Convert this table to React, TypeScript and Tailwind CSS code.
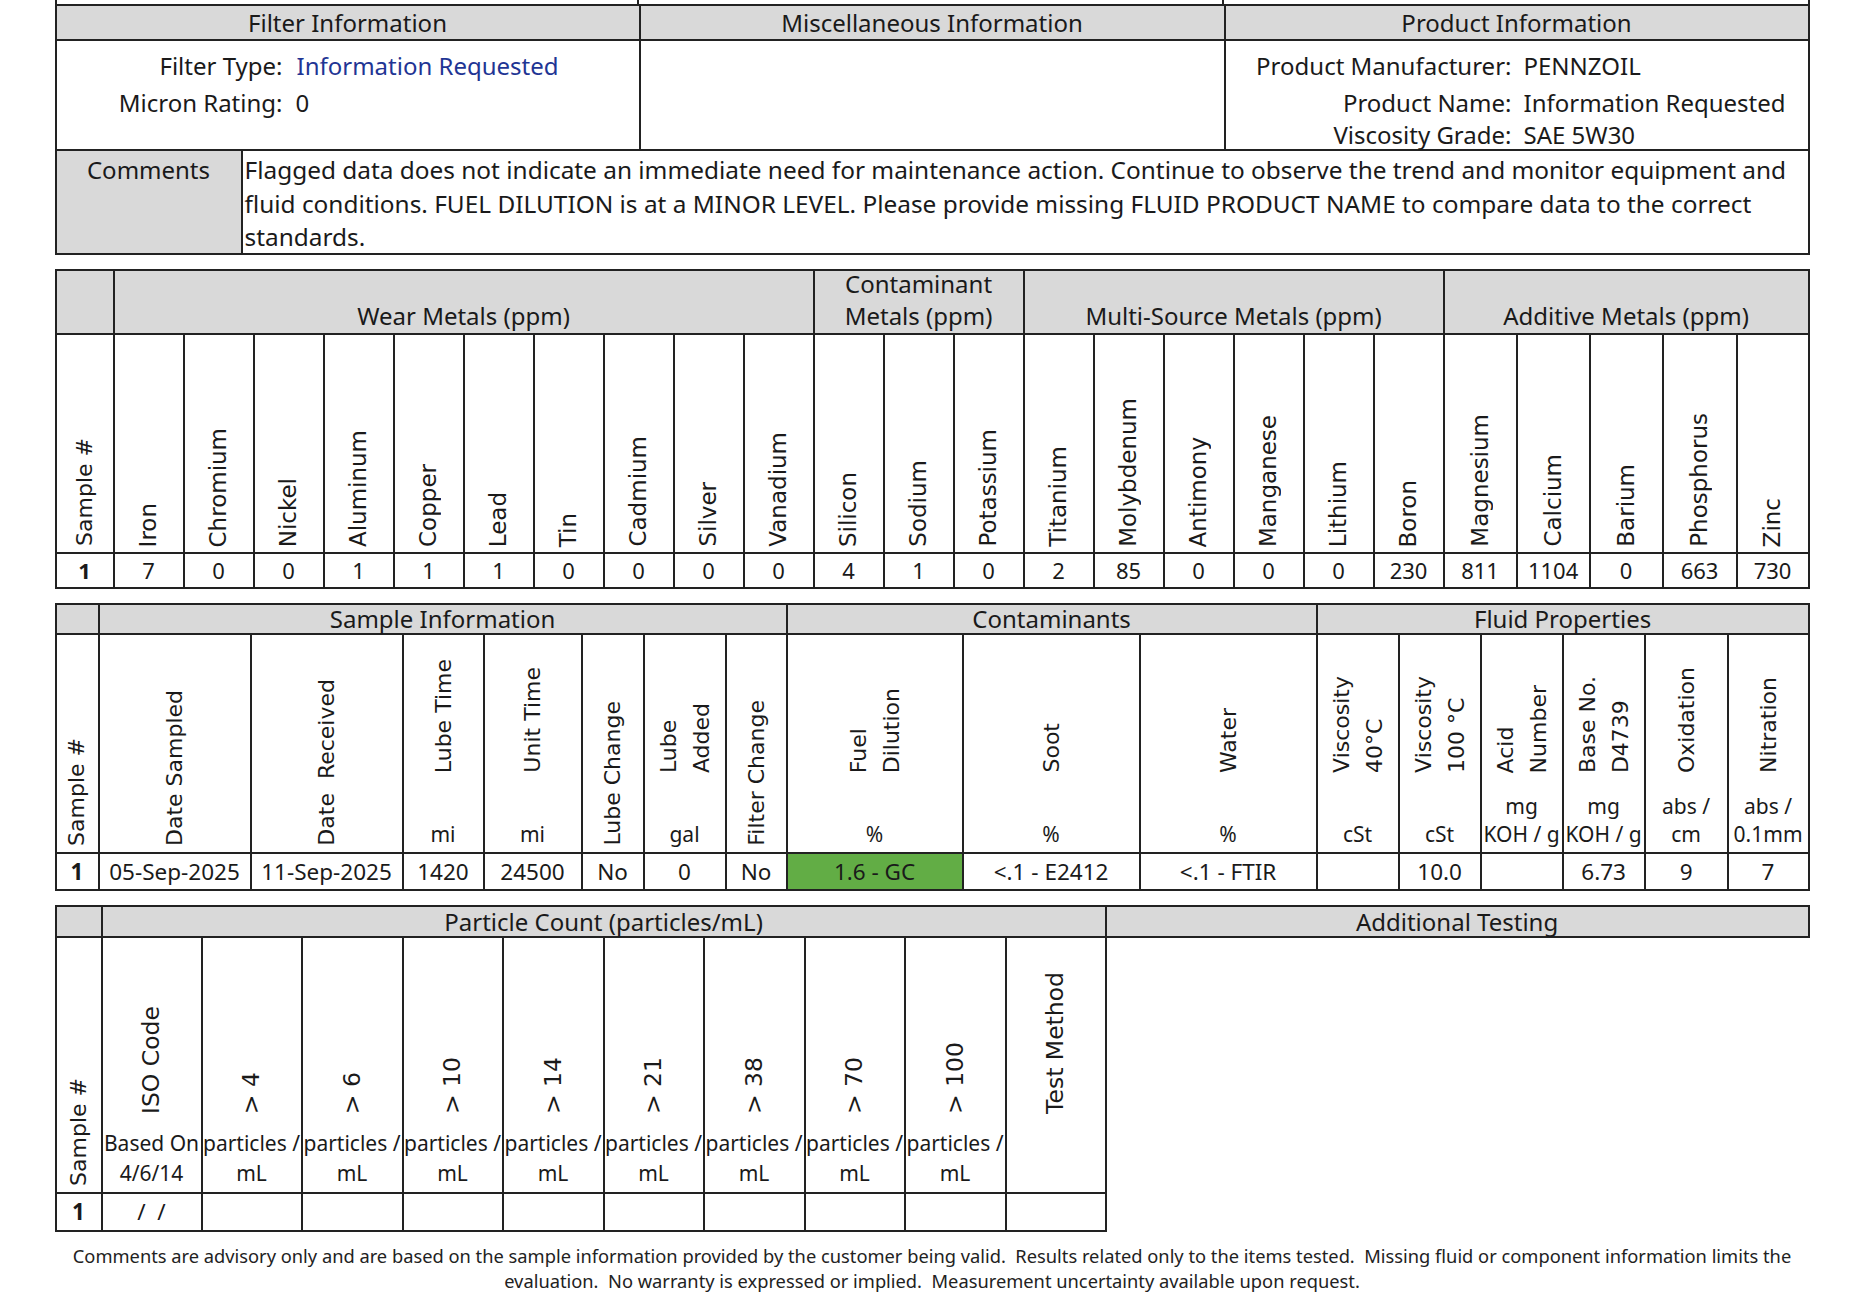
import React from 'react';

// shared cell styles
const B = 'border-2 border-[#222]';
const GRAY = 'bg-[#d9d9d9]';

type Col = { label: string; unit?: string; w?: string };

function Vert({ text, className = '' }: { text: string; className?: string }) {
  return (
    <span
      className={`[writing-mode:vertical-rl] rotate-180 whitespace-pre font-['DejaVu_Sans',sans-serif] text-[#1a1a1a] ${className}`}
    >
      {text}
    </span>
  );
}

const wearMetals = ['Iron', 'Chromium', 'Nickel', 'Aluminum', 'Copper', 'Lead', 'Tin', 'Cadmium', 'Silver', 'Vanadium'];
const contamMetals = ['Silicon', 'Sodium', 'Potassium'];
const multiMetals = ['Titanium', 'Molybdenum', 'Antimony', 'Manganese', 'Lithium', 'Boron'];
const additiveMetals = ['Magnesium', 'Calcium', 'Barium', 'Phosphorus', 'Zinc'];
const metalValues = ['7', '0', '0', '1', '1', '1', '0', '0', '0', '0', '4', '1', '0', '2', '85', '0', '0', '0', '230', '811', '1104', '0', '663', '730'];

const sampleCols: Col[] = [
  { label: 'Date Sampled', w: 'w-[152px]' },
  { label: 'Date\u00a0\u00a0Received', w: 'w-[152px]' },
  { label: 'Lube Time', unit: 'mi', w: 'w-[81px]' },
  { label: 'Unit Time', unit: 'mi', w: 'w-[98px]' },
  { label: 'Lube Change', w: 'w-[62px]' },
  { label: 'Lube\nAdded', unit: 'gal', w: 'w-[82px]' },
  { label: 'Filter Change', w: 'w-[61px]' },
  { label: 'Fuel\nDilution', unit: '%', w: 'w-[176px]' },
  { label: 'Soot', unit: '%', w: 'w-[177px]' },
  { label: 'Water', unit: '%', w: 'w-[177px]' },
  { label: 'Viscosity\n40°C', unit: 'cSt', w: 'w-[82px]' },
  { label: 'Viscosity\n100 °C', unit: 'cSt', w: 'w-[82px]' },
  { label: 'Acid\nNumber', unit: 'mg\nKOH / g', w: 'w-[82px]' },
  { label: 'Base No.\nD4739', unit: 'mg\nKOH / g', w: 'w-[82px]' },
  { label: 'Oxidation', unit: 'abs /\ncm', w: 'w-[83px]' },
  { label: 'Nitration', unit: 'abs /\n0.1mm' },
];
const sampleValues = ['05-Sep-2025', '11-Sep-2025', '1420', '24500', 'No', '0', 'No', '1.6 - GC', '<.1 - E2412', '<.1 - FTIR', '', '10.0', '', '6.73', '9', '7'];

const particleCols: Col[] = [
  { label: 'ISO Code', unit: 'Based On\n4/6/14', w: 'w-[100px]' },
  { label: '> 4', unit: 'particles /\nmL', w: 'w-[100px]' },
  { label: '> 6', unit: 'particles /\nmL', w: 'w-[101px]' },
  { label: '> 10', unit: 'particles /\nmL', w: 'w-[100px]' },
  { label: '> 14', unit: 'particles /\nmL', w: 'w-[101px]' },
  { label: '> 21', unit: 'particles /\nmL', w: 'w-[100px]' },
  { label: '> 38', unit: 'particles /\nmL', w: 'w-[101px]' },
  { label: '> 70', unit: 'particles /\nmL', w: 'w-[100px]' },
  { label: '> 100', unit: 'particles /\nmL', w: 'w-[101px]' },
  { label: 'Test Method', unit: '', w: 'w-[100px]' },
];

function TopStrip() {
  return (
    <div className="flex h-[4px]">
      <div className="w-[584px] border-x-2 border-[#222]" />
      <div className="w-[585px] border-r-2 border-[#222]" />
      <div className="flex-1 border-r-2 border-[#222]" />
    </div>
  );
}

function InfoTable() {
  return (
    <table className="w-full table-fixed border-collapse text-[24px]">
      <colgroup>
        <col className="w-[186px]" />
        <col className="w-[398px]" />
        <col className="w-[585px]" />
        <col />
      </colgroup>
      <tbody>
        <tr className={GRAY}>
          <td colSpan={2} className={`${B} p-0`}>
            <div className="flex h-[33px] items-center justify-center">Filter Information</div>
          </td>
          <td className={`${B} p-0`}>
            <div className="flex h-[33px] items-center justify-center">Miscellaneous Information</div>
          </td>
          <td className={`${B} p-0`}>
            <div className="flex h-[33px] items-center justify-center">Product Information</div>
          </td>
        </tr>
        <tr>
          <td colSpan={2} className={`${B} p-0 align-top`}>
            <div className="h-[108px] pt-[8px] leading-[34px]">
              <div className="flex">
                <span className="w-[226px] text-right">Filter Type:</span>
                <span className="ml-[14px] text-[#1f3594]">Information Requested</span>
              </div>
              <div className="mt-[3px] flex">
                <span className="w-[226px] text-right">Micron Rating:</span>
                <span className="ml-[13px]">0</span>
              </div>
            </div>
          </td>
          <td className={`${B} p-0`}>
            <div className="h-[108px]" />
          </td>
          <td className={`${B} p-0 align-top`}>
            <div className="h-[108px] pt-[8px] leading-[34px]">
              <div className="flex">
                <span className="w-[286px] text-right">Product Manufacturer:</span>
                <span className="ml-[12px]">PENNZOIL</span>
              </div>
              <div className="mt-[3px] flex">
                <span className="w-[286px] text-right">Product Name:</span>
                <span className="ml-[12px]">Information Requested</span>
              </div>
              <div className="mt-[-2px] flex">
                <span className="w-[286px] text-right">Viscosity Grade:</span>
                <span className="ml-[12px]">SAE 5W30</span>
              </div>
            </div>
          </td>
        </tr>
        <tr>
          <td className={`${B} ${GRAY} p-0 align-top`}>
            <div className="h-[102px] pt-[2px] text-center leading-[34px]">Comments</div>
          </td>
          <td colSpan={3} className={`${B} p-0 align-top`}>
            <div className="h-[102px] whitespace-nowrap pl-[2px] pt-[2px] text-[24.4px] leading-[33.5px]">
              Flagged data does not indicate an immediate need for maintenance action. Continue to observe the trend and monitor equipment and
              <br />
              fluid conditions. FUEL DILUTION is at a MINOR LEVEL. Please provide missing FLUID PRODUCT NAME to compare data to the correct
              <br />
              standards.
            </div>
          </td>
        </tr>
      </tbody>
    </table>
  );
}

function MetalsTable() {
  const names = [...wearMetals, ...contamMetals, ...multiMetals, ...additiveMetals];
  return (
    <table className="mt-[14px] w-full table-fixed border-collapse">
      <colgroup>
        <col className="w-[58px]" />
        {[...wearMetals, ...contamMetals, ...multiMetals].map((n) => (
          <col key={n} className="w-[70px]" />
        ))}
        <col className="w-[73px]" />
        <col className="w-[73px]" />
        <col className="w-[73px]" />
        <col className="w-[74px]" />
        <col />
      </colgroup>
      <tbody>
        <tr className={GRAY}>
          <td className={`${B} p-0`}>
            <div className="h-[62px]" />
          </td>
          {[
            { t: 'Wear Metals (ppm)', span: 10 },
            { t: 'Contaminant\nMetals (ppm)', span: 3 },
            { t: 'Multi-Source Metals (ppm)', span: 6 },
            { t: 'Additive Metals (ppm)', span: 5 },
          ].map((g) => (
            <td key={g.t} colSpan={g.span} className={`${B} p-0`}>
              <div className="flex h-[62px] items-end justify-center whitespace-pre pb-[1px] text-center text-[24px] leading-[32px]">
                {g.t}
              </div>
            </td>
          ))}
        </tr>
        <tr>
          <td className={`${B} p-0`}>
            <div className="flex h-[217px] items-end justify-center pb-[6px]">
              <Vert text="Sample #" className="text-[22px] leading-none" />
            </div>
          </td>
          {names.map((n) => (
            <td key={n} className={`${B} p-0`}>
              <div className="flex h-[217px] items-end justify-center pb-[5px]">
                <Vert text={n} className="text-[23px] leading-none" />
              </div>
            </td>
          ))}
        </tr>
        <tr className="text-[22px]">
          <td className={`${B} p-0`}>
            <div className="flex h-[33px] items-center justify-center font-bold">1</div>
          </td>
          {metalValues.map((v, i) => (
            <td key={i} className={`${B} p-0`}>
              <div className="flex h-[33px] items-center justify-center">{v}</div>
            </td>
          ))}
        </tr>
      </tbody>
    </table>
  );
}

function NameCell({
  col,
  h,
  unitH,
  unitLead,
  gap,
  bare,
  size,
}: {
  col: Col;
  h: string;
  unitH: string;
  unitLead: string;
  gap: string;
  bare: string;
  size: string;
}) {
  if (col.unit === undefined) {
    return (
      <div className={`flex ${h} items-end justify-center ${bare}`}>
        <Vert text={col.label} className={`${size} leading-[33px]`} />
      </div>
    );
  }
  return (
    <div className={`flex ${h} flex-col`}>
      <div className={`flex flex-1 items-end justify-center ${gap}`}>
        <Vert text={col.label} className={`${size} leading-[33px]`} />
      </div>
      <div className={`mb-[4px] flex ${unitH} flex-col items-center justify-end whitespace-pre text-center text-[21px] ${unitLead}`}>
        {col.unit}
      </div>
    </div>
  );
}

function SampleTable() {
  return (
    <table className="mt-[14px] w-full table-fixed border-collapse">
      <colgroup>
        <col className="w-[43px]" />
        {sampleCols.map((c) => (
          <col key={c.label} className={c.w} />
        ))}
      </colgroup>
      <tbody>
        <tr className={`${GRAY} text-[24px]`}>
          <td className={`${B} p-0`}>
            <div className="h-[28px]" />
          </td>
          <td colSpan={7} className={`${B} p-0`}>
            <div className="flex h-[28px] items-center justify-center">Sample Information</div>
          </td>
          <td colSpan={3} className={`${B} p-0`}>
            <div className="flex h-[28px] items-center justify-center">Contaminants</div>
          </td>
          <td colSpan={6} className={`${B} p-0`}>
            <div className="flex h-[28px] items-center justify-center">Fluid Properties</div>
          </td>
        </tr>
        <tr>
          <td className={`${B} p-0`}>
            <div className="flex h-[217px] items-end justify-center pb-[6px]">
              <Vert text="Sample #" className="text-[22px] leading-none" />
            </div>
          </td>
          {sampleCols.map((c) => (
            <td key={c.label} className={`${B} p-0`}>
              <NameCell col={c} h="h-[217px]" unitH="h-[56px]" unitLead="leading-[28px]" gap="pb-[19px]" bare="pb-[6px]" size="text-[22px]" />
            </td>
          ))}
        </tr>
        <tr className="text-[22.5px]">
          <td className={`${B} p-0`}>
            <div className="flex h-[35px] items-center justify-center font-bold">1</div>
          </td>
          {sampleValues.map((v, i) => (
            <td key={i} className={`${B} p-0 ${i === 7 ? 'bg-[#62ad45]' : ''}`}>
              <div className="flex h-[35px] items-center justify-center whitespace-nowrap">{v}</div>
            </td>
          ))}
        </tr>
      </tbody>
    </table>
  );
}

function ParticleTable() {
  return (
    <table className="mt-[14px] w-full table-fixed border-collapse">
      <colgroup>
        <col className="w-[46px]" />
        {particleCols.map((c) => (
          <col key={c.label} className={c.w} />
        ))}
        <col />
      </colgroup>
      <tbody>
        <tr className="text-[24px]">
          <td className={`${B} ${GRAY} p-0`}>
            <div className="h-[29px]" />
          </td>
          <td colSpan={10} className={`${B} ${GRAY} p-0`}>
            <div className="flex h-[29px] items-center justify-center">Particle Count (particles/mL)</div>
          </td>
          <td className={`${B} ${GRAY} p-0`}>
            <div className="flex h-[29px] items-center justify-center">Additional Testing</div>
          </td>
        </tr>
        <tr>
          <td className={`${B} p-0`}>
            <div className="flex h-[254px] items-end justify-center pb-[6px]">
              <Vert text="Sample #" className="text-[22px] leading-none" />
            </div>
          </td>
          {particleCols.map((c) => (
            <td key={c.label} className={`${B} p-0`}>
              <NameCell col={c} h="h-[254px]" unitH="h-[60px]" unitLead="leading-[30px]" gap="pb-[14px]" bare="pb-[6px]" size="text-[23.5px]" />
            </td>
          ))}
          <td rowSpan={2} className="p-0" />
        </tr>
        <tr className="text-[22.5px]">
          <td className={`${B} p-0`}>
            <div className="flex h-[36px] items-center justify-center font-bold">1</div>
          </td>
          {particleCols.map((c, i) => (
            <td key={c.label} className={`${B} p-0`}>
              <div className="flex h-[36px] items-center justify-center whitespace-pre">{i === 0 ? '/  /' : ''}</div>
            </td>
          ))}
        </tr>
      </tbody>
    </table>
  );
}

export default function App() {
  return (
    <div className="min-h-[1300px] w-[1864px] bg-white font-['Noto_Sans',sans-serif] text-[#1a1a1a]">
      <div className="mx-auto w-[1755px]">
        <TopStrip />
        <InfoTable />
        <MetalsTable />
        <SampleTable />
        <ParticleTable />
      </div>
      {/* disclaimer */}
      <p className="mt-[12px] whitespace-pre text-center text-[18.3px] leading-[24.5px] text-[#222]">
        {'Comments are advisory only and are based on the sample information provided by the customer being valid.  Results related only to the items tested.  Missing fluid or component information limits the'}
        <br />
        {'evaluation.  No warranty is expressed or implied.  Measurement uncertainty available upon request.'}
      </p>
    </div>
  );
}
